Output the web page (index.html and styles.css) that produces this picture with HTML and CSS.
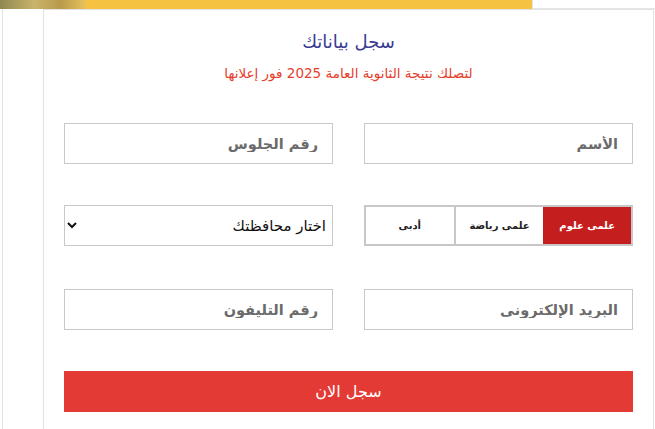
FILE: index.html
```html
<!DOCTYPE html>
<html>
<head>
	<title>سجل بياناتك</title>
	<link rel="stylesheet" href="styles.css">
</head>
<body>
	<!-- Bottom edge of the banner above the form -->
	<div class="banner">
		<div class="banner-img"></div>
		<div class="banner-bar"></div>
		<div class="banner-side"></div>
	</div>

	<div class="page">
		<div class="card" dir="rtl">
			<h2 class="title">سجل بياناتك</h2>
			<p class="subtitle">لتصلك نتيجة الثانوية العامة 2025 فور إعلانها</p>

			<form class="form">
				<div class="row">
					<input class="field" type="text" placeholder="الأسم">
					<input class="field" type="text" placeholder="رقم الجلوس">
				</div>

				<div class="row">
					<!-- Division picker -->
					<div class="division">
						<span class="option active">علمى علوم</span>
						<span class="option">علمى رياضة</span>
						<span class="option">أدبى</span>
					</div>
					<select class="field select">
						<option>اختار محافظتك</option>
					</select>
				</div>

				<div class="row row-last">
					<input class="field" type="text" placeholder="البريد الإلكترونى">
					<input class="field" type="text" placeholder="رقم التليفون">
				</div>

				<button class="submit" type="button">سجل الان</button>
			</form>
		</div>
	</div>
</body>
</html>
```

FILE: styles.css
```css
/* General reset */
* {
	margin: 0;
	padding: 0;
	box-sizing: border-box;
}

body {
	width: 655px;
	height: 429px;
	overflow: hidden;
	background: #fff;
	font-family: "DejaVu Sans", "Noto Sans", sans-serif;
}

/* Banner strip at the top */
.banner {
	display: flex;
	height: 9px;
}

.banner-img {
	width: 86px;
	background: linear-gradient(90deg, #8f8752 0%, #c9b46a 40%, #b89a4c 70%, #e8c25a 100%);
}

.banner-bar {
	width: 446px;
	background-color: #f5c242;
}

.banner-side {
	flex: 1;
	border-left: 1px solid #e6e6e6;
	border-bottom: 1px solid #e6e6e6;
}

/* Outer wrapper */
.page {
	margin-left: 2px;
	border-left: 1px solid #e2e2e2;
	padding-left: 40px;
	height: 420px;
}

/* Form card */
.card {
	width: 611px;
	height: 100%;
	border: 1px solid #e2e2e2;
	border-bottom: none;
	padding: 19px 20px 0;
}

.title {
	text-align: center;
	font-size: 18px;
	font-weight: normal;
	color: #3a3a92;
	line-height: 26px;
}

.subtitle {
	text-align: center;
	font-size: 13.5px;
	color: #e6402c;
	margin-top: 8px;
	line-height: 20px;
}

.form {
	display: flex;
	flex-direction: column;
	gap: 41px;
	margin-top: 40px;
}

.row {
	display: grid;
	grid-template-columns: 1fr 1fr;
	gap: 31px;
}

.row-last {
	margin-top: 2px;
}

/* Text fields */
.field {
	height: 41px;
	width: 100%;
	border: 1px solid #c8c8c8;
	background: #fff;
	padding: 0 14px;
	font-family: inherit;
	font-size: 14.5px;
	color: #222;
	outline: none;
}

.field::placeholder {
	color: #6b6b6b;
	font-weight: bold;
}

.select {
	padding: 0 2px 0 4px;
	font-size: 15px;
	color: #111;
}

/* Division toggle */
.division {
	display: flex;
	height: 41px;
	border: 2px solid #c8c8c8;
}

.option {
	flex: 1;
	display: flex;
	align-items: center;
	justify-content: center;
	font-size: 10px;
	font-weight: bold;
	color: #222;
	background: #fff;
	border-left: 2px solid #c8c8c8;
}

.option:last-child {
	border-left: none;
}

.option.active {
	background-color: #c41e1e;
	color: #fff;
	border-left: none;
}

/* Submit button */
.submit {
	height: 41px;
	width: 100%;
	border: none;
	background-color: #e43a35;
	color: #fff;
	font-family: inherit;
	font-size: 16px;
}
```
